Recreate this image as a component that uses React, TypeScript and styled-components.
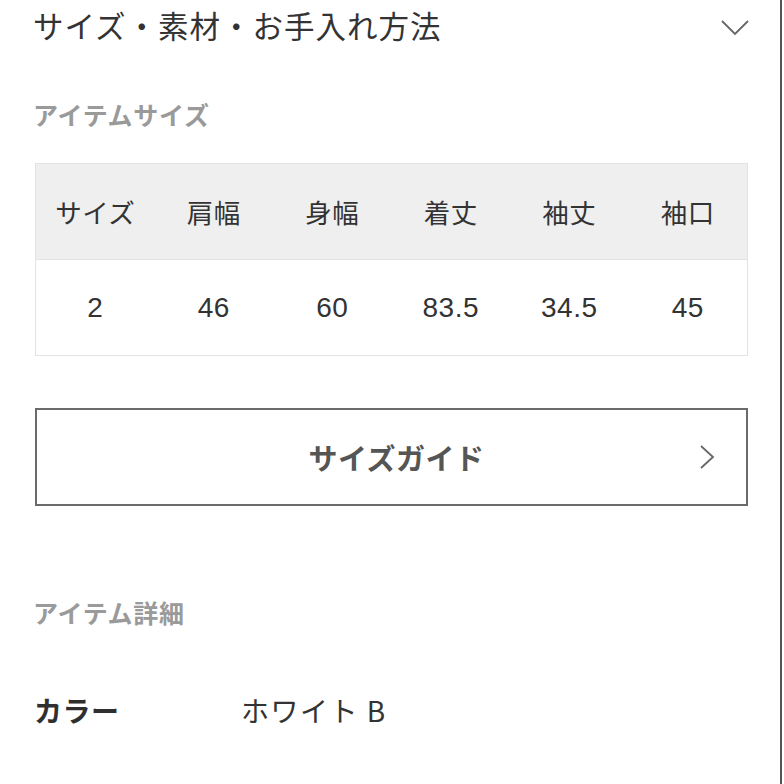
import styled, { createGlobalStyle } from "styled-components";

const GlobalStyle = createGlobalStyle`
  html, body {
    margin: 0;
    padding: 0;
    background: #ffffff;
  }
  body {
    font-family: "Noto Sans CJK JP", "Noto Sans", sans-serif;
    color: #333333;
  }
`;

const Page = styled.div`
  width: 782px;
  height: 784px;
  border-right: 2px solid #555555;
  padding: 0 34px 0 35px;
  box-sizing: border-box;
  overflow: hidden;
`;

const AccordionHeader = styled.div`
  display: flex;
  align-items: center;
  justify-content: space-between;
  height: 50px;
`;

const AccordionTitle = styled.h2`
  margin: 0 0 0 -2px;
  font-size: 30.5px;
  font-weight: 400;
  letter-spacing: 1px;
  color: #333333;
`;

const SectionLabel = styled.div<{ gap: number }>`
  margin: ${(props) => props.gap}px 0 0 -2px;
  font-size: 25px;
  line-height: 35px;
  font-weight: 700;
  letter-spacing: 0.7px;
  color: #9a9a9a;
`;

const SizeTable = styled.div`
  margin-top: 31px;
  width: 713px;
  border: 1px solid #e3e3e3;
  box-sizing: border-box;
`;

const TableRow = styled.div<{ head?: boolean }>`
  display: grid;
  grid-template-columns: repeat(6, 1fr);
  align-items: center;
  height: 95px;
  background: ${(props) => (props.head ? "#efefef" : "#ffffff")};
  border-bottom: ${(props) => (props.head ? "1px solid #e3e3e3" : "none")};
`;

const Cell = styled.div<{ numeric?: boolean }>`
  text-align: center;
  color: #333333;
  font-family: ${(props) =>
    props.numeric
      ? '"Liberation Sans", Arial, sans-serif'
      : '"Noto Sans CJK JP", sans-serif'};
  font-size: ${(props) => (props.numeric ? "28px" : "26.5px")};
  letter-spacing: 0.5px;
`;

const GuideButton = styled.button`
  margin-top: 52px;
  width: 713px;
  height: 98px;
  border: 2px solid #6a6a6a;
  background: #ffffff;
  display: grid;
  grid-template-columns: 1fr auto 1fr;
  align-items: center;
  padding: 0 30px;
  box-sizing: border-box;
  font-family: "Noto Sans CJK JP", sans-serif;
  cursor: pointer;

  & > svg {
    justify-self: end;
  }
`;

const GuideLabel = styled.span`
  margin-left: 10px;
  font-size: 29px;
  font-weight: 700;
  color: #555555;
  letter-spacing: 0.5px;
`;

const DetailRow = styled.div`
  display: flex;
  align-items: center;
  margin-top: 60px;
  height: 40px;
`;

const DetailKey = styled.div`
  width: 207px;
  margin-left: -1px;
  font-size: 28px;
  font-weight: 700;
  letter-spacing: 0.5px;
  color: #2f2f2f;
`;

const DetailValue = styled.div`
  font-size: 28px;
  color: #333333;
  letter-spacing: 1.5px;
`;

const headers = ["サイズ", "肩幅", "身幅", "着丈", "袖丈", "袖口"];
const values = ["2", "46", "60", "83.5", "34.5", "45"];

export default function App() {
  return (
    <>
      <GlobalStyle />
      <Page>
        <AccordionHeader>
          <AccordionTitle>サイズ・素材・お手入れ方法</AccordionTitle>
          <svg width="30" height="18" viewBox="0 0 30 18" style={{ marginRight: -4, marginTop: 3 }}>
            <polyline points="2,3 15,16 28,3" fill="none" stroke="#666" strokeWidth="1.8" />
          </svg>
        </AccordionHeader>

        <SectionLabel gap={47}>アイテムサイズ</SectionLabel>

        <SizeTable>
          <TableRow head>
            {headers.map((h) => (
              <Cell key={h}>{h}</Cell>
            ))}
          </TableRow>
          <TableRow>
            {values.map((v, i) => (
              <Cell key={i} numeric>
                {v}
              </Cell>
            ))}
          </TableRow>
        </SizeTable>

        <GuideButton>
          <span />
          <GuideLabel>サイズガイド</GuideLabel>
          <svg width="18" height="26" viewBox="0 0 18 26">
            <polyline points="3,2 15,13 3,24" fill="none" stroke="#666" strokeWidth="1.8" />
          </svg>
        </GuideButton>

        <SectionLabel gap={89}>アイテム詳細</SectionLabel>

        <DetailRow>
          <DetailKey>カラー</DetailKey>
          <DetailValue>ホワイト B</DetailValue>
        </DetailRow>
      </Page>
    </>
  );
}
